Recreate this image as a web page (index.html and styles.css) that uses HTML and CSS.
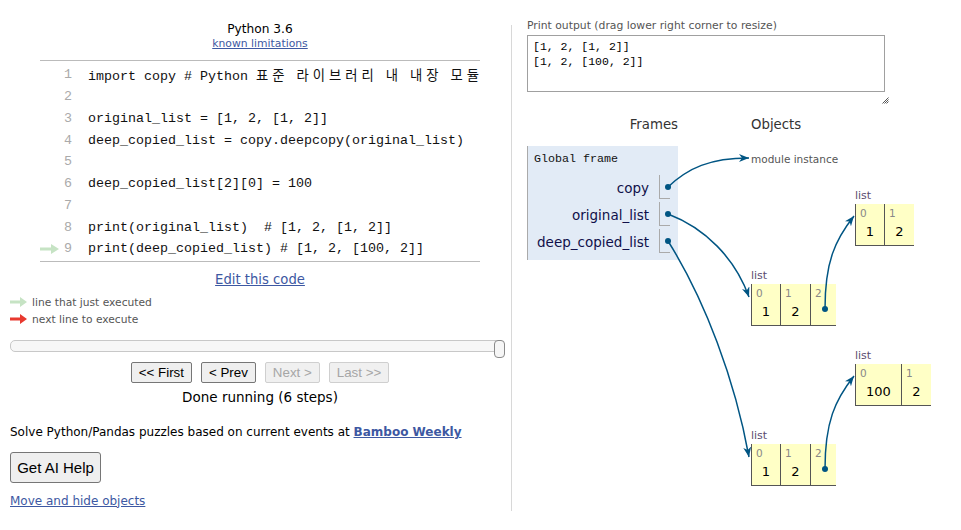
FILE: index.html
```html
<!DOCTYPE html>
<html>
<head>
<meta charset="utf-8">
<title>Python Tutor</title>
<link rel="stylesheet" href="styles.css">
</head>
<body>
<div class="page">
  <div class="left">
    <div class="editor">
      <div class="lang">Python 3.6</div>
      <div class="limits"><a href="#">known limitations</a></div>
      <div class="code">
        <div class="line"><span class="gut"></span><span class="num">1</span><span class="src">import copy # Python <span class="ko">표준</span> <span class="ko">라이브러리</span> <span class="ko">내</span> <span class="ko">내장</span> <span class="ko">모듈</span></span></div>
        <div class="line"><span class="gut"></span><span class="num">2</span><span class="src"></span></div>
        <div class="line"><span class="gut"></span><span class="num">3</span><span class="src">original_list = [1, 2, [1, 2]]</span></div>
        <div class="line"><span class="gut"></span><span class="num">4</span><span class="src">deep_copied_list = copy.deepcopy(original_list)</span></div>
        <div class="line"><span class="gut"></span><span class="num">5</span><span class="src"></span></div>
        <div class="line"><span class="gut"></span><span class="num">6</span><span class="src">deep_copied_list[2][0] = 100</span></div>
        <div class="line"><span class="gut"></span><span class="num">7</span><span class="src"></span></div>
        <div class="line"><span class="gut"></span><span class="num">8</span><span class="src">print(original_list)  # [1, 2, [1, 2]]</span></div>
        <div class="line"><span class="gut"><svg class="arrow" width="20" height="10" viewBox="0 0 20 10"><path d="M0,3.5 H11 V0 L19,5 L11,10 V6.5 H0 Z" fill="#c6e3c4"/></svg></span><span class="num">9</span><span class="src">print(deep_copied_list) # [1, 2, [100, 2]]</span></div>
      </div>
      <div class="edit"><a href="#">Edit this code</a></div>
    </div>

    <div class="legend">
      <div class="leg"><svg class="legarrow" width="18" height="10" viewBox="0 0 18 10"><path d="M0,3.5 H10 V0 L17,5 L10,10 V6.5 H0 Z" fill="#c6e3c4"/></svg><span>line that just executed</span></div>
      <div class="leg"><svg class="legarrow" width="18" height="10" viewBox="0 0 18 10"><path d="M0,3.5 H10 V0 L17,5 L10,10 V6.5 H0 Z" fill="#e8392f"/></svg><span>next line to execute</span></div>
    </div>

    <div class="slider">
      <div class="track"></div>
      <div class="thumb"></div>
    </div>

    <div class="controls">
      <div class="buttons">
        <button class="btn">&lt;&lt; First</button>
        <button class="btn">&lt; Prev</button>
        <button class="btn off">Next &gt;</button>
        <button class="btn off">Last &gt;&gt;</button>
      </div>
      <div class="done">Done running (6 steps)</div>
    </div>

    <div class="promo">Solve Python/Pandas puzzles based on current events at <a href="#" class="bold">Bamboo Weekly</a></div>
    <button class="aibtn">Get AI Help</button>
    <div class="movehide"><a href="#">Move and hide objects</a></div>
  </div>

  <div class="divider"></div>

  <div class="right">
    <div class="outlabel">Print output (drag lower right corner to resize)</div>
    <div class="outwrap">
      <div class="output">[1, 2, [1, 2]]
[1, 2, [100, 2]]</div>
      <svg class="grip" width="7" height="7" viewBox="0 0 7 7"><path d="M6.5,0.5 L0.5,6.5 M6.5,2.5 L2.5,6.5 M6.5,4.5 L4.5,6.5" stroke="#555" stroke-width="1"/></svg>
    </div>

    <div class="viz">
      <div class="hdr hdr-frames">Frames</div>
      <div class="hdr hdr-objects">Objects</div>

      <div class="frames">
        <div class="frame">
          <div class="ftitle">Global frame</div>
          <div class="vars">
            <div class="var"><span class="vname">copy</span><span class="vval"></span></div>
            <div class="var"><span class="vname">original_list</span><span class="vval"></span></div>
            <div class="var"><span class="vname">deep_copied_list</span><span class="vval"></span></div>
          </div>
        </div>
      </div>

      <div class="heap">
        <div class="node n-module">module instance</div>

        <div class="node n-l1">
          <div class="ltype">list</div>
          <div class="cells">
            <div class="cell w29"><div class="idx">0</div><div class="val">1</div></div>
            <div class="cell w30"><div class="idx">1</div><div class="val">2</div></div>
          </div>
        </div>

        <div class="node n-l2">
          <div class="ltype">list</div>
          <div class="cells">
            <div class="cell w29"><div class="idx">0</div><div class="val">1</div></div>
            <div class="cell w30"><div class="idx">1</div><div class="val">2</div></div>
            <div class="cell w26"><div class="idx">2</div><div class="val"></div></div>
          </div>
        </div>

        <div class="node n-l3">
          <div class="ltype">list</div>
          <div class="cells">
            <div class="cell w46"><div class="idx">0</div><div class="val">100</div></div>
            <div class="cell w30"><div class="idx">1</div><div class="val">2</div></div>
          </div>
        </div>

        <div class="node n-l4">
          <div class="ltype">list</div>
          <div class="cells">
            <div class="cell w29"><div class="idx">0</div><div class="val">1</div></div>
            <div class="cell w30"><div class="idx">1</div><div class="val">2</div></div>
            <div class="cell w26"><div class="idx">2</div><div class="val"></div></div>
          </div>
        </div>
      </div>
    </div>

    <svg class="wires" width="449" height="530" viewBox="512 0 449 530">
      <defs>
        <marker id="ah" viewBox="0 0 10 8" refX="10" refY="4" markerWidth="10" markerHeight="8" markerUnits="userSpaceOnUse" orient="auto">
          <path d="M0,0 L10,4 L0,8 L3,4 Z" fill="#005583"/>
        </marker>
      </defs>
      <g fill="none" stroke="#005583" stroke-width="1.5">
        <path d="M668,187 C688,168 710,158 749,158" marker-end="url(#ah)"/>
        <path d="M668,214 C705,228 735,258 749,297" marker-end="url(#ah)"/>
        <path d="M668,241 C705,300 735,380 749,457" marker-end="url(#ah)"/>
        <path d="M825,309 C825,262 835,240 854,216" marker-end="url(#ah)"/>
        <path d="M825,469 C825,422 835,400 854,376" marker-end="url(#ah)"/>
      </g>
      <g fill="#005583">
        <circle cx="668" cy="187" r="3"/>
        <circle cx="668" cy="214" r="3"/>
        <circle cx="668" cy="241" r="3"/>
        <circle cx="825" cy="309" r="3"/>
        <circle cx="825" cy="469" r="3"/>
      </g>
    </svg>
  </div>
</div>
</body>
</html>
```

FILE: styles.css
```css
* { box-sizing: border-box; }

html, body {
  margin: 0;
  padding: 0;
  background: #fff;
}

body {
  font-family: "DejaVu Sans", Verdana, sans-serif;
  color: #000;
  width: 961px;
  height: 530px;
  overflow: hidden;
}

a { color: #3d58a2; }

.page {
  display: flex;
  align-items: flex-start;
}

/* ---------- left column ---------- */
.left {
  width: 511px;
  flex: none;
}

.editor {
  margin-left: 40px;
  width: 440px;
  text-align: center;
}

.lang {
  margin-top: 21px;
  font-size: 12.2px;
  line-height: 16px;
  color: #000;
}

.limits {
  font-size: 10.8px;
  line-height: 14px;
}

.code {
  margin-top: 9px;
  border-top: 1px solid #bbb;
  border-bottom: 1px solid #bbb;
  padding: 3px 0 1px;
  overflow: hidden;
  text-align: left;
  font-family: "Liberation Mono", "Noto Sans CJK KR", monospace;
  font-size: 13.33px;
}

.line {
  display: flex;
  height: 21.75px;
  align-items: center;
  white-space: pre;
}

.gut {
  width: 20px;
  flex: none;
  display: flex;
  align-items: center;
}

.arrow { display: block; }

.num {
  width: 12px;
  flex: none;
  text-align: right;
  color: #aaa;
}

.src {
  padding-left: 16px;
  color: #111;
}

.ko {
  font-family: "Noto Sans CJK KR", sans-serif;
  letter-spacing: 4px;
}

.edit {
  margin-top: 9px;
  font-size: 13.2px;
  line-height: 18px;
}

.legend {
  margin: 5px 0 0 10px;
  font-size: 10.7px;
  color: #555;
}

.leg {
  display: flex;
  align-items: center;
  height: 17px;
  gap: 4px;
}

.legarrow { display: block; }

.slider {
  position: relative;
  margin: 12px 0 0 10px;
  width: 495px;
  height: 18px;
}

.track {
  margin-top: 2px;
  height: 12px;
  border: 1px solid #c8c8c8;
  border-radius: 5px;
  background: #f7f7f7;
}

.thumb {
  position: absolute;
  right: 0;
  top: 0;
  width: 11px;
  height: 18px;
  border: 1px solid #8a8a8a;
  border-radius: 4px;
  background: #f6f6f6;
}

.controls {
  margin-left: 40px;
  width: 440px;
  text-align: center;
}

.buttons {
  margin-top: 4px;
  display: flex;
  justify-content: center;
  gap: 9px;
}

.btn {
  font-family: "Liberation Sans", Arial, sans-serif;
  font-size: 13.33px;
  height: 21px;
  padding: 0 7px;
  line-height: 17px;
  background: #efefef;
  border: 1px solid #767676;
  border-radius: 2px;
  color: #000;
}

.btn.off {
  color: #a6a6a6;
  border-color: #cfcfcf;
  background: #f0f0f0;
}

.done {
  margin-top: 5px;
  font-size: 13.5px;
  line-height: 18px;
}

.promo {
  margin: 18px 0 0 10px;
  font-size: 12px;
  line-height: 16px;
  white-space: nowrap;
}

.bold { font-weight: bold; }

.aibtn {
  display: block;
  margin: 12px 0 0 10px;
  width: 91px;
  height: 31px;
  padding: 0;
  font-family: "Liberation Sans", Arial, sans-serif;
  font-size: 15px;
  background: #efefef;
  border: 1px solid #767676;
  border-radius: 3px;
  color: #000;
}

.movehide {
  margin: 10px 0 0 10px;
  font-size: 12px;
  line-height: 16px;
}

/* ---------- divider ---------- */
.divider {
  flex: none;
  width: 1px;
  margin-top: 25px;
  height: 486px;
  background: #d8d8d8;
}

/* ---------- right column ---------- */
.right {
  position: relative;
  flex: none;
  width: 449px;
  height: 530px;
  padding-left: 15px;
}

.outlabel {
  margin-top: 19px;
  font-size: 10.8px;
  line-height: 14px;
  color: #555;
}

.outwrap {
  position: relative;
  margin-top: 2px;
  width: 358px;
}

.output {
  height: 57px;
  border: 1px solid #a0a0a0;
  padding: 3px 5px;
  font-family: "Liberation Mono", monospace;
  font-size: 11.5px;
  line-height: 15px;
  white-space: pre;
  color: #000;
}

.grip {
  position: absolute;
  left: 355px;
  top: 62px;
}

.viz {
  margin-top: 24px;
  display: grid;
  grid-template-columns: 151px 1fr;
  column-gap: 73px;
  row-gap: 13px;
}

.hdr {
  font-size: 13.3px;
  line-height: 17px;
  color: #333;
}

.hdr-frames { text-align: right; }

.frame {
  background: #e2ebf6;
  border-left: 1px solid #aaa;
  padding: 6px 8px 7px 6px;
}

.ftitle {
  font-family: "Liberation Mono", monospace;
  font-size: 11.67px;
  line-height: 14px;
  color: #111;
}

.vars {
  margin-top: 9px;
  display: flex;
  flex-direction: column;
  gap: 3px;
}

.var {
  display: flex;
  justify-content: flex-end;
  align-items: center;
  gap: 10px;
}

.vname {
  font-size: 13.5px;
  color: #10104a;
  padding-top: 2px;
}

.vval {
  width: 11px;
  height: 24px;
  border-left: 1px solid #aaa;
  border-bottom: 1px solid #aaa;
}

.heap {
  position: relative;
  height: 340px;
}

.node { position: absolute; }

.n-module {
  top: 6px;
  left: 0;
  font-size: 10.5px;
  line-height: 14px;
  color: #555;
  white-space: nowrap;
}

.n-l1 { top: 42px; left: 104px; }
.n-l2 { top: 122px; left: 0; }
.n-l3 { top: 202px; left: 104px; }
.n-l4 { top: 282px; left: 0; }

.ltype {
  font-size: 11px;
  line-height: 16px;
  color: #5a4d70;
}

.cells {
  display: flex;
  border-bottom: 1px solid #555;
}

.cell {
  height: 41px;
  background: #ffffc6;
  border-left: 1px solid #555;
  padding-top: 2px;
}

.w26 { width: 26px; }
.w29 { width: 29px; }
.w30 { width: 30px; }
.w46 { width: 46px; }

.idx {
  font-size: 10.5px;
  line-height: 14px;
  color: #888;
  padding-left: 4px;
}

.val {
  margin-top: 3px;
  font-size: 13px;
  line-height: 18px;
  text-align: center;
  color: #000;
}

.wires {
  position: absolute;
  left: 0;
  top: 0;
  pointer-events: none;
}
```
